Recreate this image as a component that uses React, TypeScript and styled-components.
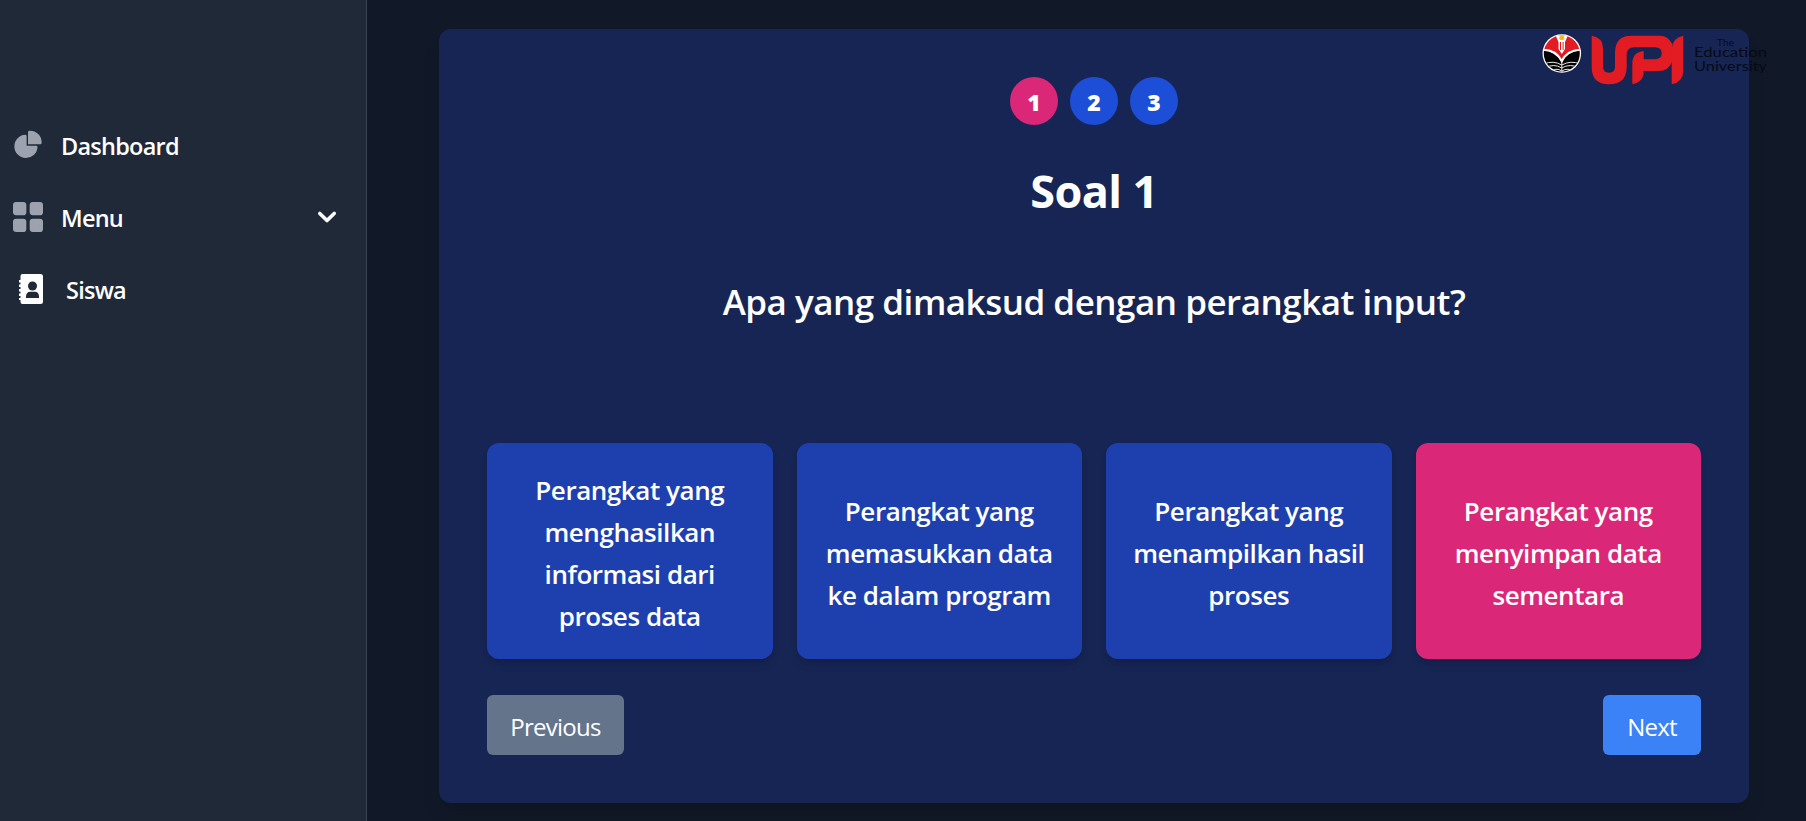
import React from 'react';
import styled, { createGlobalStyle } from 'styled-components';

const Global = createGlobalStyle`
  *, *::before, *::after { box-sizing: border-box; }
  body { margin: 0; background: #111827; color: #fff; font-family: "Open Sans", "Noto Sans", sans-serif; }
  button { font-family: inherit; color: inherit; border: 0; margin: 0; }
`;

const Page = styled.div`
  display: flex;
  height: 821px;
  overflow: hidden;
  position: relative;
`;

const Sidebar = styled.aside`
  width: 367px;
  flex: none;
  background: #1f2937;
  border-right: 1px solid #374151;
  padding: 109px 21px 0 0;
`;

const NavItem = styled.a`
  display: flex;
  align-items: center;
  height: 72px;
  padding-left: 13px;
  font-size: 23.5px;
  font-weight: 600;
  line-height: 36px;
  letter-spacing: -0.75px;
`;

const NavIcon = styled.span`
  display: flex;
  width: 30px;
  height: 30px;
  margin-right: 18px;
  color: #9ca3af;
`;

const NavText = styled.span<{ $indent?: number }>`
  flex: 1;
  padding-left: ${(p) => p.$indent ?? 0}px;
  padding-top: 1px;
`;

const Main = styled.main`
  flex: 1;
  padding: 29px 57px 0 72px;
`;

const Card = styled.section`
  height: 774px;
  padding: 48px;
  border-radius: 12px;
  background: #172554;
  box-shadow: 0 15px 22px -4px rgba(0, 0, 0, 0.1), 0 6px 9px -6px rgba(0, 0, 0, 0.1);
  display: flex;
  flex-direction: column;
`;

const Steps = styled.div`
  display: flex;
  justify-content: center;
  gap: 12px;
`;

const Step = styled.button<{ $active?: boolean }>`
  width: 48px;
  height: 48px;
  padding: 2px 0 0;
  border-radius: 50%;
  background: ${(p) => (p.$active ? '#db2777' : '#1d4ed8')};
  font-size: 23px;
  font-weight: 800;
  line-height: 36px;
`;

const Title = styled.h1`
  margin: 36px 0 0;
  text-align: center;
  font-size: 45px;
  font-weight: 700;
  line-height: 60px;
  letter-spacing: -0.6px;
`;

const Question = styled.h2`
  margin: 56px 0 0;
  height: 142px;
  text-align: center;
  font-size: 35px;
  font-weight: 600;
  line-height: 49px;
  letter-spacing: -0.49px;
`;

const Answers = styled.div`
  display: grid;
  grid-template-columns: repeat(4, 1fr);
  gap: 24px;
  margin-top: 24px;
`;

const Answer = styled.button<{ $selected?: boolean }>`
  height: 216px;
  padding: 4px 24px 0;
  border-radius: 12px;
  background: ${(p) => (p.$selected ? '#db2777' : '#1e40af')};
  box-shadow: 0 6px 9px -1px rgba(0, 0, 0, 0.1), 0 3px 6px -2px rgba(0, 0, 0, 0.1);
  font-size: 26px;
  font-weight: 600;
  line-height: 42px;
  letter-spacing: -0.45px;
`;

const Line = styled.span`
  display: block;
  white-space: nowrap;
`;

const Footer = styled.footer`
  display: flex;
  justify-content: space-between;
  margin-top: 36px;
`;

const NavButton = styled.button<{ $muted?: boolean }>`
  width: ${(p) => (p.$muted ? 137 : 98)}px;
  height: 60px;
  padding: 3px 0 0;
  border-radius: 6px;
  background: ${(p) => (p.$muted ? '#64748b' : '#3b82f6')};
  font-size: 24px;
  line-height: 36px;
  letter-spacing: -0.75px;
`;

const Brand = styled.div`
  position: absolute;
  top: 28px;
  left: 1536px;
  width: 240px;
  height: 64px;
`;

const PieIcon = () => (
  <svg width="30" height="30" viewBox="0 0 22 21" fill="currentColor">
    <path d="M16.975 11H10V4.025a1 1 0 0 0-1.066-.998 8.5 8.5 0 1 0 9.039 9.039.999.999 0 0 0-1-1.066h.002Z" />
    <path d="M12.5 0c-.157 0-.311.01-.565.027A1 1 0 0 0 11 1.02V10h8.975a1 1 0 0 0 1-.935c.013-.188.028-.374.028-.565A8.51 8.51 0 0 0 12.5 0Z" />
  </svg>
);

const GridIcon = () => (
  <svg width="30" height="30" viewBox="0 0 18 18" fill="currentColor">
    <path d="M6.143 0H1.857A1.857 1.857 0 0 0 0 1.857v4.286C0 7.169.831 8 1.857 8h4.286A1.857 1.857 0 0 0 8 6.143V1.857A1.857 1.857 0 0 0 6.143 0Zm10 0h-4.286A1.857 1.857 0 0 0 10 1.857v4.286C10 7.169 10.831 8 11.857 8h4.286A1.857 1.857 0 0 0 18 6.143V1.857A1.857 1.857 0 0 0 16.143 0Zm-10 10H1.857A1.857 1.857 0 0 0 0 11.857v4.286C0 17.169.831 18 1.857 18h4.286A1.857 1.857 0 0 0 8 16.143v-4.286A1.857 1.857 0 0 0 6.143 10Zm10 0h-4.286A1.857 1.857 0 0 0 10 11.857v4.286c0 1.026.831 1.857 1.857 1.857h4.286A1.857 1.857 0 0 0 18 16.143v-4.286A1.857 1.857 0 0 0 16.143 10Z" />
  </svg>
);

const ContactsIcon = () => (
  <svg width="30" height="30" viewBox="1 0 30 30">
    <path fill="#fff" d="M10 0H28.500Q31 0 31 2.500V27.500Q31 30 28.500 30H10.500Q8.500 30 8.500 28V26H7v-2h1.500v-2H7V19.500h1.500v-2H7V15h1.500v-2H7V10.500h1.500v-2H7V6h1.500V2Q8.500 0 10.500 0Z" />
    <circle cx="20.500" cy="12" r="4.500" fill="#1f2937" />
    <path fill="#1f2937" d="M14 24v-1.500c0-3 1.800-4.700 4-4.700h5c2.300 0 4 1.700 4 4.700V24Z" />
  </svg>
);

const ChevronIcon = () => (
  <svg width="36" height="36" viewBox="0 0 20 20" fill="#fff">
    <path fillRule="evenodd" clipRule="evenodd" d="M5.293 7.293a1 1 0 011.414 0L10 10.586l3.293-3.293a1 1 0 111.414 1.414l-4 4a1 1 0 01-1.414 0l-4-4a1 1 0 010-1.414z" />
  </svg>
);

const Logo = () => (
  <svg width="240" height="64" viewBox="0 0 240 64">
    <defs>
      <clipPath id="seal"><circle cx="25.800" cy="25.500" r="18" /></clipPath>
    </defs>
    <circle cx="25.800" cy="25.500" r="19.300" fill="#fff" />
    <g clipPath="url(#seal)">
      <path d="M6 6H46V22Q31 22 25.800 33Q20 22 6 22Z" fill="#e31b23" />
      <path d="M6 22.500Q20 23 25.800 35Q31 23 46 22.500V46H6Z" fill="#000" />
      <path d="M6 21.800Q20 21.500 25.800 33Q31.500 21.500 46 21.800" fill="none" stroke="#fff" strokeWidth="2" />
      <path d="M18.500 5L22.500 14L22.500 21L25.800 26L29 21L29 14L33 5Z" fill="#fff" />
      <path d="M24 14h1v8h-1ZM26.600 14h1v8h-1Z" fill="#e31b23" />
      <path d="M8 36Q17 32 25.800 37Q35 32 44 36M9 40Q18 35 25.800 40Q34 35 43 40M14 44Q20 39 25.800 43Q32 39 38 44M25.800 32V45" fill="none" stroke="#e8e8e8" strokeWidth="1" />
    </g>
    <circle cx="25.800" cy="9.800" r="2.500" fill="#fbb616" />
    <g fill="#e31b23">
      <path d="M55.700 7.700Q67 9.500 67 20V38.500Q67 44.700 73 44.700Q79 44.700 79 38.500V24Q79.500 7.700 95 7.700H124Q132 8 136 15.500V34Q132 43 123 43H107.700Q108 54 96.300 56.300V35Q96.600 24 107.700 23V31.300H119Q125.700 31 125.700 25.300Q125.700 19.500 119 19.300H98Q90.700 19.500 90.700 27V39Q90.500 56.300 73 56.300Q55.700 56.300 55.700 39Z" />
      <path d="M147.300 7.700V43Q147 54 135.700 56.300V21Q136 10 147.300 7.700Z" />
    </g>
    <g fill="#060a14" fontFamily="Lato, sans-serif">
      <text x="181" y="17.500" fontSize="10" textLength="17">The</text>
      <text x="158" y="29" fontSize="14.300" textLength="73" lengthAdjust="spacingAndGlyphs">Education</text>
      <text x="158" y="42.500" fontSize="14.300" textLength="73" lengthAdjust="spacingAndGlyphs">University</text>
    </g>
  </svg>
);

const answers = [
  { lines: ['Perangkat yang', 'menghasilkan', 'informasi dari', 'proses data'] },
  { lines: ['Perangkat yang', 'memasukkan data', 'ke dalam program'] },
  { lines: ['Perangkat yang', 'menampilkan hasil', 'proses'] },
  { lines: ['Perangkat yang', 'menyimpan data', 'sementara'], selected: true },
];

export default function App() {
  return (
    <>
      <Global />
      <Page>
        <Sidebar>
          <NavItem><NavIcon><PieIcon /></NavIcon><NavText>Dashboard</NavText></NavItem>
          <NavItem><NavIcon><GridIcon /></NavIcon><NavText>Menu</NavText><ChevronIcon /></NavItem>
          <NavItem><NavIcon><ContactsIcon /></NavIcon><NavText $indent={5}>Siswa</NavText></NavItem>
        </Sidebar>
        <Main>
          <Card>
            <Steps>
              {[1, 2, 3].map((n) => <Step key={n} $active={n === 1}>{n}</Step>)}
            </Steps>
            <Title>Soal 1</Title>
            <Question>Apa yang dimaksud dengan perangkat input?</Question>
            <Answers>
              {answers.map((a, i) => (
                <Answer key={i} $selected={a.selected}>
                  {a.lines.map((l) => <Line key={l}>{l}</Line>)}
                </Answer>
              ))}
            </Answers>
            <Footer>
              <NavButton $muted>Previous</NavButton>
              <NavButton>Next</NavButton>
            </Footer>
          </Card>
        </Main>
        <Brand><Logo /></Brand>
      </Page>
    </>
  );
}
